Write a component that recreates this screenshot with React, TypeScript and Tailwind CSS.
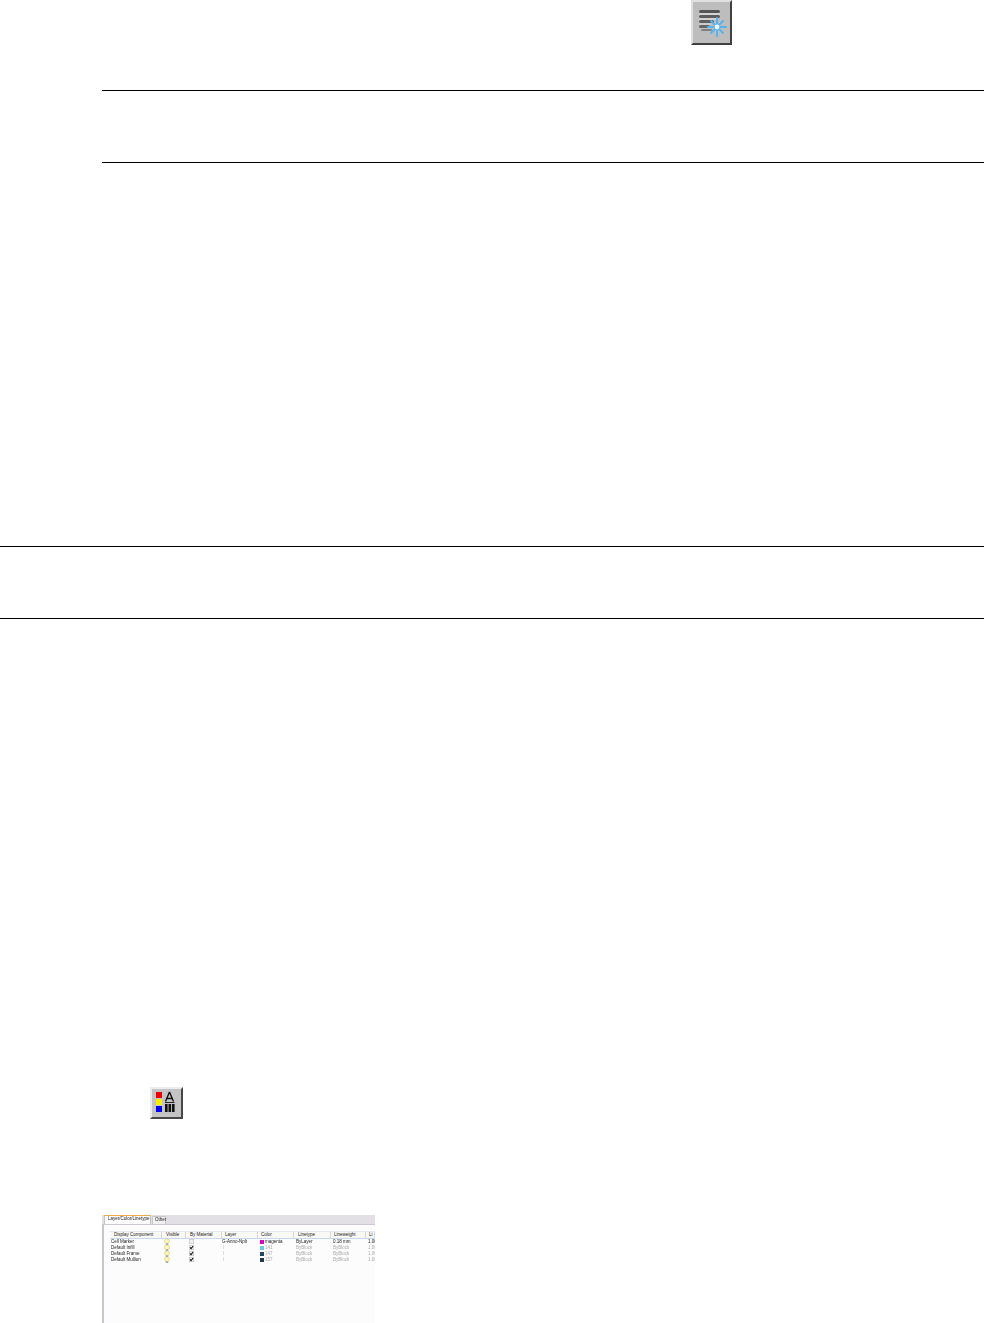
const cols = [
  { name: "Display Component", w: "w-[52px]", pl: "pl-[4px]" },
  { name: "Visible", w: "w-[24px]", pl: "pl-[4px]" },
  { name: "By Material", w: "w-[36px]", pl: "pl-[4px]" },
  { name: "Layer", w: "w-[36px]", pl: "pl-[3px]" },
  { name: "Color", w: "w-[36px]", pl: "pl-[3px]" },
  { name: "Linetype", w: "w-[37px]", pl: "pl-[4px]" },
  { name: "Lineweight", w: "w-[35px]", pl: "pl-[3px]" },
  { name: "Li", w: "w-[9px]", pl: "pl-[3px]" },
];

const rows = [
  { name: "Cell Marker", checked: false, layer: "G-Anno-Nplt", color: "magenta", swatch: "bg-[#e000c0]", lt: "ByLayer", lw: "0.18 mm", li: "1.00", dim: false },
  { name: "Default Infill", checked: true, layer: "I", color: "141", swatch: "bg-[#70c8e0]", lt: "ByBlock", lw: "ByBlock", li: "1.00", dim: true },
  { name: "Default Frame", checked: true, layer: "I", color: "147", swatch: "bg-[#204858]", lt: "ByBlock", lw: "ByBlock", li: "1.00", dim: true },
  { name: "Default Mullion", checked: true, layer: "I", color: "157", swatch: "bg-[#203848]", lt: "ByBlock", lw: "ByBlock", li: "1.00", dim: true },
];

function Bulb() {
  return (
    <svg width="6" height="6" viewBox="0 0 6 6" className="block">
      <rect x="0.6" y="0.2" width="4.8" height="4.2" rx="2" fill="#fff9c8" stroke="#e4d060" strokeWidth="0.8" />
      <rect x="1.8" y="4.3" width="2.4" height="1.6" fill="#9aa0b0" />
    </svg>
  );
}

function Check({ on }: { on: boolean }) {
  return (
    <svg width="5" height="5" viewBox="0 0 5 5" className="block">
      <rect x="0.25" y="0.25" width="4.5" height="4.5" fill="#f0f0f0" stroke="#b8b8b8" strokeWidth="0.5" />
      {on && <path d="M1 2.4 L2.1 3.7 L4.1 1" fill="none" stroke="#111" strokeWidth="1.1" />}
    </svg>
  );
}

function FreezeIcon() {
  return (
    <svg width="37" height="41" viewBox="0 0 37 41" className="block blur-[0.7px]">
      <rect x="6" y="8" width="21" height="3" rx="1.5" fill="#555" />
      <rect x="6" y="11" width="21" height="2" fill="#d4d4d4" />
      <rect x="6" y="13" width="21" height="3" rx="1.5" fill="#5c5c5c" />
      <rect x="6" y="16" width="18" height="2" fill="#d0d0d0" />
      <rect x="6" y="18" width="15" height="3" rx="1.5" fill="#606060" />
      <rect x="6" y="21" width="12" height="2" fill="#cccccc" />
      <rect x="6" y="23" width="11" height="3" rx="1.5" fill="#666" />
      <rect x="8" y="27" width="11" height="2" rx="1" fill="#808080" />
      <g stroke="#55b4f0" strokeWidth="2" strokeLinecap="round">
        <path d="M24 16 V34" />
        <path d="M15 25 H33" />
        <path d="M18 19 L30 31" />
        <path d="M30 19 L18 31" />
      </g>
      <circle cx="24" cy="25" r="2.4" fill="#f0f8ff" />
    </svg>
  );
}

function ColorIcon() {
  return (
    <svg width="29" height="28" viewBox="0 0 29 28" className="block">
      <rect x="4" y="3" width="6" height="6" fill="#f00000" />
      <rect x="4" y="10" width="6" height="6" fill="#f8f000" />
      <rect x="4" y="17" width="6" height="6" fill="#0000f0" />
      <path d="M17.5 3 L13.5 12.5 M17.5 3 L21.5 12.5 M15 9.5 H20" fill="none" stroke="#111" strokeWidth="1.4" />
      <path d="M13 13.5 H22.5" stroke="#222" strokeWidth="1" />
      <rect x="13" y="15" width="2.6" height="8" fill="#111" />
      <rect x="16.5" y="15" width="2.6" height="8" fill="#111" />
      <rect x="20" y="15" width="2.6" height="8" fill="#111" />
    </svg>
  );
}

export default function App() {
  return (
    <div className="w-[984px] h-[1323px] overflow-hidden bg-white flex flex-col font-['Liberation_Sans',sans-serif]">
      <div className="h-[45px] pl-[691px]">
        <div className="w-[41px] h-[45px] bg-[#bdbdbd] border-t-2 border-l-2 border-t-[#e0e0e0] border-l-[#e0e0e0] border-b-2 border-r-2 border-b-[#404040] border-r-[#404040]">
          <FreezeIcon />
        </div>
      </div>

      <div className="mt-[45px] ml-[102px] h-[73px] border-y border-black" />
      <div className="mt-[383px] h-[73px] border-y border-black" />

      <div className="mt-[468px] ml-[150px] w-[33px] h-[32px] bg-[#c4c4c4] border-t-2 border-l-2 border-t-[#ececec] border-l-[#ececec] border-b-2 border-r-2 border-b-[#484848] border-r-[#484848]">
        <ColorIcon />
      </div>

      <div className="mt-[96px] ml-[102px] w-[273px] h-[108px] overflow-hidden bg-[#fcfcfc] flex flex-col text-[4.5px] leading-[6px] text-[#222]">
        <div className="h-[10px] shrink-0 bg-[#e2e0e4] flex items-end pl-[2px] border-b border-b-[#cfc8d0]">
          <div className="h-[9px] w-[47px] bg-[#fbfbfb] border-x border-x-[#c4c4c4] border-t border-t-[#f0a848] pl-[3px] whitespace-nowrap blur-[0.25px]">
            Layer/Color/Linetype
          </div>
          <div className="h-[8px] w-[14px] ml-px bg-[#f0f0f0] border-x border-t border-[#c8c8c8] pl-[2px] blur-[0.25px]">
            Other
          </div>
        </div>

        <div className="flex-1 flex border-l-2 border-l-[#c8c6cc] pl-[6px] pt-[6px]">
          <div className="w-[265px] shrink-0 blur-[0.25px]">
            <div className="flex h-[8px] bg-[#f8f8f4] border-b border-b-[#c8d8ec] border-t border-t-[#e4e8f0]">
              {cols.map((c) => (
                <div key={c.name} className={`${c.w} ${c.pl} shrink-0 border-r border-r-[#d8d8d8] whitespace-nowrap overflow-hidden leading-[6px]`}>
                  {c.name}
                </div>
              ))}
            </div>
            {rows.map((r) => (
              <div key={r.name} className="flex h-[6px] leading-[6px] whitespace-nowrap">
                <div className="w-[52px] shrink-0 pl-[1px]">{r.name}</div>
                <div className="w-[24px] shrink-0 pl-[2px]"><Bulb /></div>
                <div className="w-[36px] shrink-0 pl-[3px]"><Check on={r.checked} /></div>
                <div className={`w-[36px] shrink-0 ${r.dim ? "text-[#bbb] pl-[1px]" : ""}`}>{r.layer}</div>
                <div className="w-[36px] shrink-0 pl-[2px] flex items-center gap-[1px]">
                  <span className={`w-[4px] h-[4px] shrink-0 ${r.swatch}`} />
                  <span className={r.dim ? "text-[#aaa]" : ""}>{r.color}</span>
                </div>
                <div className={`w-[37px] shrink-0 pl-[2px] ${r.dim ? "text-[#aaa]" : ""}`}>{r.lt}</div>
                <div className={`w-[35px] shrink-0 pl-[2px] ${r.dim ? "text-[#aaa]" : ""}`}>{r.lw}</div>
                <div className={`w-[9px] shrink-0 pl-[2px] overflow-hidden ${r.dim ? "text-[#aaa]" : ""}`}>{r.li}</div>
              </div>
            ))}
          </div>
        </div>
      </div>
    </div>
  );
}
